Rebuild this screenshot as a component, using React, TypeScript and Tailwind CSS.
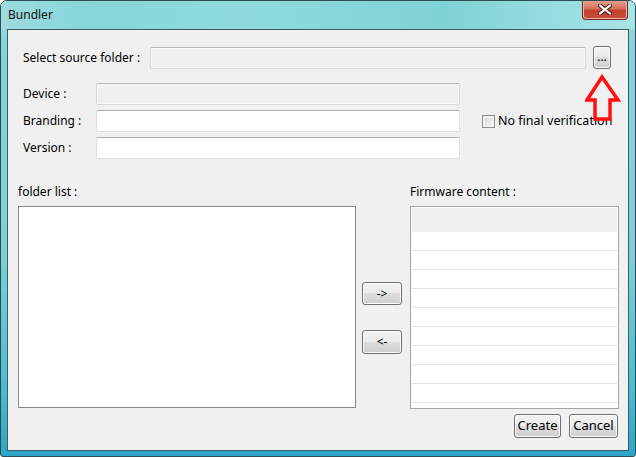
import React from "react";

function WinButton({ label, className }: { label: string; className: string }) {
  return (
    <div
      className={`flex items-center justify-center rounded-[3px] border border-[#707070] bg-[linear-gradient(#f2f2f2_0%,#ebebeb_50%,#dddddd_50%,#cfcfcf_100%)] shadow-[inset_0_0_0_1px_#fcfcfc] text-[12px] text-black ${className}`}
    >
      {label}
    </div>
  );
}

function TextBox({ disabled, className }: { disabled?: boolean; className: string }) {
  return (
    <div
      className={`h-[22px] rounded-[2px] border ${
        disabled
          ? "border-[#d9d9d9] border-t-[#b9b9b9] bg-[#f0f0f0] shadow-[inset_0_0_0_1px_#f7f7f7]"
          : "border-[#dbdfe6] border-t-[#abadb3] bg-white"
      } ${className}`}
    />
  );
}

function CloseIcon() {
  return (
    <svg width="14" height="11" viewBox="0 0 14 11">
      <path d="M2 1.5 L12 9.5 M12 1.5 L2 9.5" stroke="#4a1a14" strokeWidth="4.2" strokeLinecap="square" />
      <path d="M2 1.5 L12 9.5 M12 1.5 L2 9.5" stroke="#ffffff" strokeWidth="2.2" strokeLinecap="square" />
    </svg>
  );
}

export default function App() {
  const rows = Array.from({ length: 9 });

  return (
    <div className="relative flex h-[457px] w-[636px] flex-col overflow-hidden rounded-t-[7px] rounded-b-[3px] border border-[#2f4c55] bg-[linear-gradient(180deg,#a3dfe2_0%,#84d4d8_10%,#7dd1d6_55%,#4dbcd0_85%,#2ea6c6_100%)] font-['Segoe_UI','Noto_Sans',sans-serif] text-black">
      {/* title bar */}
      <div className="flex h-[28px] items-start bg-[linear-gradient(90deg,#9edcdf_0%,#88d6d9_12%,#8edadd_40%,#7fd2d5_70%,#a9e4e6_100%)]">
        <span className="pl-[7px] pt-[6px] text-[12px] leading-[16px] text-[#111]">Bundler</span>
        <div className="ml-auto mr-[7px] -mt-px flex h-[20px] w-[46px] items-center justify-center rounded-b-[4px] border border-t-0 border-[#6b2a22] bg-[linear-gradient(#e8a593_0%,#d6705c_45%,#c2402c_55%,#c8503a_100%)] shadow-[inset_0_0_0_1px_#efb4a6]">
          <CloseIcon />
        </div>
      </div>

      {/* client area */}
      <div className="mx-[6px] flex h-[422px] flex-col border border-[#3d5b63] bg-[#f0f0f0] text-[12px]">
        <div className="mt-[16px] flex h-[23px] items-center">
          <span className="w-[142px] pl-[15px]">Select source folder :</span>
          <TextBox disabled className="w-[436px]" />
          <WinButton label="..." className="ml-[7px] h-[23px] w-[18px] pb-[2px] text-[10px]" />
        </div>

        <div className="mt-[14px] flex h-[22px] items-center">
          <span className="w-[88px] pl-[15px]">Device :</span>
          <TextBox disabled className="w-[364px]" />
        </div>

        <div className="mt-[5px] flex h-[22px] items-center">
          <span className="w-[88px] pl-[15px]">Branding :</span>
          <TextBox className="w-[364px]" />
          <div className="ml-[22px] h-[13px] w-[13px] border border-[#8e8f8f] bg-[linear-gradient(135deg,#d7d7d7,#f4f4f4)] shadow-[inset_0_0_0_2px_#f1f1f1]" />
          <span className="ml-[3px] text-[12.5px]">No final verification</span>
        </div>

        <div className="mt-[5px] flex h-[22px] items-center">
          <span className="w-[88px] pl-[15px]">Version :</span>
          <TextBox className="w-[364px]" />
        </div>

        <div className="mt-[25px] flex pl-[10px]">
          <div className="flex w-[338px] flex-col">
            <span className="h-[16px] leading-[16px]">folder list :</span>
            <div className="mt-[6px] h-[202px] border border-[#828790] bg-white" />
          </div>

          <div className="ml-[6px] flex w-[40px] flex-col pt-[98px]">
            <WinButton label="->" className="h-[23px] w-[40px] text-[11px]" />
            <WinButton label="<-" className="mt-[25px] h-[24px] w-[40px] text-[11px]" />
          </div>

          <div className="ml-[8px] flex w-[209px] flex-col">
            <span className="h-[16px] leading-[16px]">Firmware content :</span>
            <div className="mt-[6px] flex h-[203px] flex-col overflow-hidden border border-[#a5a5a5] bg-white p-px">
              <div className="h-[24px] shrink-0 bg-[#f0f0f0]" />
              {rows.map((_, i) => (
                <div key={i} className="h-[19px] shrink-0 border-b border-[#e2e2e2]" />
              ))}
            </div>
          </div>
        </div>

        <div className="mt-[5px] flex justify-end pr-[10px]">
          <WinButton label="Create" className="h-[24px] w-[47px] text-[13px]" />
          <WinButton label="Cancel" className="ml-[8px] h-[24px] w-[49px] text-[13px]" />
        </div>
      </div>

      {/* red annotation arrow */}
      <svg className="absolute left-[584px] top-[73px]" width="36" height="48" viewBox="0 0 36 48">
        <polygon
          points="17,3 33,26 25,26 25,45 10,45 10,26 2,26"
          fill="none"
          stroke="#ff1010"
          strokeWidth="3.5"
          strokeLinejoin="miter"
        />
      </svg>
    </div>
  );
}
